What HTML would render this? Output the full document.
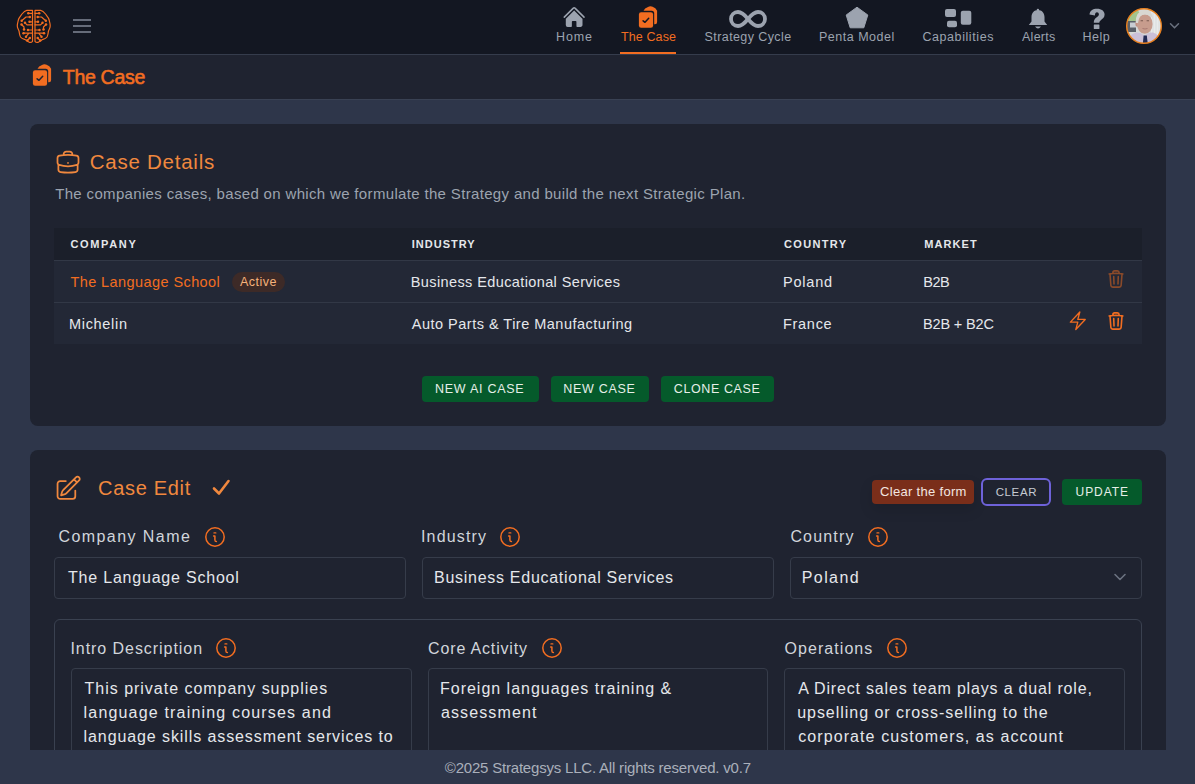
<!DOCTYPE html>
<html><head><meta charset="utf-8">
<style>
*{box-sizing:border-box;margin:0;padding:0}
html,body{width:1195px;height:784px;overflow:hidden;background:#2e364a;font-family:"Liberation Sans",sans-serif;position:relative}
.a{position:absolute}
.t{position:absolute;white-space:nowrap;line-height:1}
#nav{position:absolute;left:0;top:0;width:1195px;height:55px;background:#131722;border-bottom:1px solid #353c4c}
.nl{position:absolute;top:31px;font-size:12px;color:#9ca3af;white-space:nowrap;line-height:1}
#sub{position:absolute;left:0;top:55px;width:1195px;height:45px;background:#1f2330;border-bottom:1px solid #394153}
.card{position:absolute;left:30px;width:1136px;background:#1f2330;border-radius:8px}
.th{position:absolute;top:240px;font-size:11px;font-weight:bold;letter-spacing:1px;color:#e5e7eb;line-height:1;white-space:nowrap}
.td{position:absolute;font-size:14.5px;color:#e5e7eb;white-space:nowrap;line-height:1}
.btn{position:absolute;background:#055a2b;color:#e6efe8;font-size:12.5px;letter-spacing:1.4px;text-align:center;border-radius:4px;line-height:26px;height:26px}
#footer{position:absolute;left:0;top:750px;width:1195px;height:34px;background:#2e364a}
.lab{position:absolute;font-size:16px;color:#d1d5db;white-space:nowrap;line-height:1}
.info{position:absolute;width:20px;height:20px}
.inp{position:absolute;border:1px solid #363c4a;border-radius:4px}
.itx{position:absolute;font-size:16.5px;color:#e5e7eb;white-space:nowrap;line-height:1}
.ta{position:absolute;font-size:16.5px;color:#e5e7eb;line-height:24px;white-space:nowrap}
</style></head>
<body>
<div id="nav"></div>

<!-- brain logo -->
<svg class="a" style="left:14px;top:7px" width="40" height="40" viewBox="0 0 40 40" fill="none" stroke="#f26d21" stroke-width="1.2" stroke-linecap="round" stroke-linejoin="round">
 <g id="bl"><path d="M18.5 3.3 H12.8 C11 3.6 9.5 5 8 7 C6.5 9 5 10.5 4.5 12.5 C4 14.5 3.3 16.5 3.3 19 C3.3 21 4.5 22.5 5 24 C5.5 26 5.3 28 6.5 30 C7.5 31.5 9 32 10.5 32.3 C12 32.8 13 34.3 15.3 35.3 C16.5 35.6 18 35 18.5 34.3 Z"/><path d="M14.3 6.3 H18.5 M15.8 10 H12 L7.7 13.8 M15.5 14.8 H18.5 M11 15.8 L13 17.8 H18.5 M7.5 17.5 L10 20 V22.5 M14 23 H18.5 M9.5 26.2 H18.5 M12 29.7 L14.5 26.6 M15.8 31 L13.3 33.5"/><g fill="#f26d21" stroke="none"><circle cx="14.3" cy="6.3" r="1.25"/><circle cx="15.8" cy="10" r="1.25"/><circle cx="7.7" cy="13.8" r="1.25"/><circle cx="15.5" cy="14.8" r="1.25"/><circle cx="11" cy="15.8" r="1.25"/><circle cx="7.5" cy="17.5" r="1.25"/><circle cx="10" cy="22.5" r="1.25"/><circle cx="14" cy="23" r="1.25"/><circle cx="9.5" cy="26.2" r="1.25"/><circle cx="12" cy="29.7" r="1.25"/><circle cx="15.8" cy="31" r="1.25"/><circle cx="13.3" cy="33.5" r="1.25"/></g></g>
 <use href="#bl" transform="translate(39.5 0) scale(-1 1)"/>
</svg>
<!-- hamburger -->
<div class="a" style="left:73px;top:19px;width:18px;height:2px;background:#666c7a"></div>
<div class="a" style="left:73px;top:25px;width:18px;height:2px;background:#666c7a"></div>
<div class="a" style="left:73px;top:31px;width:18px;height:2px;background:#666c7a"></div>

<!-- nav: home -->
<svg class="a" style="left:562px;top:4.7px" width="24.3" height="24.3" viewBox="0 0 24 24" fill="#9ca3af"><path d="M11.47 3.841a.75.75 0 0 1 1.06 0l8.69 8.69a.75.75 0 1 0 1.06-1.061l-8.689-8.69a2.25 2.25 0 0 0-3.182 0l-8.69 8.69a.75.75 0 1 0 1.061 1.06l8.69-8.689Z"/><path d="m12 5.432 8.159 8.159c.03.03.06.058.091.086v6.198c0 1.035-.84 1.875-1.875 1.875H15a.75.75 0 0 1-.75-.75v-4.5a.75.75 0 0 0-.75-.75h-3a.75.75 0 0 0-.75.75V21a.75.75 0 0 1-.75.75H5.625a1.875 1.875 0 0 1-1.875-1.875v-6.198a2.29 2.29 0 0 0 .091-.086L12 5.432Z"/></svg>

<!-- nav: the case -->
<svg class="a" style="left:638px;top:5px" width="20" height="24" viewBox="0 0 20 24">
  <path d="M5.5 5.8 Q6.8 3.2 9.5 2.3 Q12 0.8 14.6 1.7 Q17.8 2.6 19.1 5.8 V17 Q19.1 19.2 17 19.2 H16.2 V8.3 Q16.2 5.8 13.7 5.8 Z" fill="#f26d21"/>
  <rect x="0.9" y="7.2" width="14.2" height="15.5" rx="2.2" fill="#f26d21"/>
  <path d="M5.1 15.8 L7 17.3 L10.7 13.3" fill="none" stroke="#131722" stroke-width="1.5" stroke-linecap="round" stroke-linejoin="round"/>
</svg>
<div class="a" style="left:620px;top:52px;width:56px;height:2px;background:#f26d21"></div>

<!-- nav: strategy cycle -->
<svg class="a" style="left:728px;top:9px" width="40" height="20" viewBox="0 0 40 20">
  <path d="M20 10 C16 5 13.5 3 10 3 C6 3 3 6 3 10 C3 14 6 17 10 17 C13.5 17 16 15 20 10 C24 5 26.5 3 30 3 C34 3 37 6 37 10 C37 14 34 17 30 17 C26.5 17 24 15 20 10 Z" fill="none" stroke="#9ca3af" stroke-width="3.8"/>
</svg>

<!-- nav: penta -->
<svg class="a" style="left:845px;top:6px" width="24" height="23" viewBox="0 0 24 23">
  <path d="M12 1.2 L22.8 9 L18.8 21.8 H5.2 L1.2 9 Z" fill="#9ca3af" stroke="#9ca3af" stroke-width="1" stroke-linejoin="round"/>
</svg>

<!-- nav: capabilities -->
<svg class="a" style="left:944px;top:8px" width="29" height="21" viewBox="0 0 29 21">
  <rect x="1" y="1" width="11" height="8" rx="2" fill="#9ca3af"/>
  <rect x="3" y="12.8" width="10" height="6.5" rx="2" fill="#9ca3af"/>
  <rect x="16.8" y="2.8" width="10.5" height="14" rx="2" fill="#9ca3af"/>
</svg>

<!-- nav: alerts -->
<svg class="a" style="left:1027px;top:8px" width="22" height="22" viewBox="0 0 22 22">
  <path d="M11 2 C7.2 2 4.5 4.8 4.5 9 V13.5 L1.8 17 H20.2 L17.5 13.5 V9 C17.5 4.8 14.8 2 11 2 Z" fill="#9ca3af"/>
  <circle cx="10.9" cy="1.9" r="1.2" fill="#9ca3af"/>
  <path d="M8 18.6 H14 Q11 22.4 8 18.6 Z" fill="#9ca3af"/>
</svg>

<!-- nav: help -->
<svg class="a" style="left:1080px;top:4px" width="32" height="28" viewBox="0 0 32 28">
  <path d="M9.5 10.6 C9.8 6.8 12.8 4.8 17 4.8 C21.5 4.8 24.6 7.2 24.6 10.5 C24.6 13.4 22.6 14.8 20.8 16.2 C19.7 17.1 19.3 17.8 19.3 18.8 H13.8 C13.8 16.4 14.6 15 16.4 13.6 C17.9 12.4 18.9 11.6 18.9 10.4 C18.9 9.1 18 8.3 17 8.3 C15.8 8.3 15 9.1 14.9 11.6 Z" fill="#9ca3af"/>
  <rect x="13.8" y="20.4" width="5.6" height="4.6" rx="0.5" fill="#9ca3af"/>
</svg>
<!-- avatar -->
<svg class="a" style="left:1122px;top:4px" width="44" height="44" viewBox="0 0 44 44">
  <defs><clipPath id="cc"><circle cx="22" cy="22" r="17.4"/></clipPath><filter id="bl2" x="-10%" y="-10%" width="120%" height="120%"><feGaussianBlur stdDeviation="0.45"/></filter></defs>
  <g clip-path="url(#cc)"><g filter="url(#bl2)">
    <rect width="44" height="44" fill="#d6d9d8"/>
    <ellipse cx="11" cy="12" rx="7.5" ry="7" fill="#a3c48c"/>
    <rect x="3" y="17" width="11" height="11" fill="#5a6068"/>
    <rect x="8" y="18.5" width="6" height="5" fill="#c9cdd2"/>
    <rect x="29" y="4" width="13" height="27" fill="#e8eaea"/>
    <path d="M31 6 V30 M34 6 V30 M37 6 V30" stroke="#cfd3d4" stroke-width="0.6"/>
    <ellipse cx="15.3" cy="19.5" rx="1.9" ry="3.2" fill="#bf8f80"/>
    <ellipse cx="22.8" cy="20" rx="7.8" ry="9.8" fill="#c79c8d"/>
    <path d="M13.8 19 Q13.2 7.5 22 6 Q31 5.5 31 15.5 Q29.5 11 23 10.6 Q17 10.6 16 19 Z" fill="#d9d8d2"/>
    <path d="M18.6 16.8 H21 M24.6 16.8 H27" stroke="#7a5a50" stroke-width="1.1"/>
    <path d="M20.5 24.5 Q23 25.5 25.5 24.5" stroke="#a0706a" stroke-width="0.8" fill="none"/>
    <path d="M4 44 Q5 31 14 28.5 Q18.5 28 22.5 31.5 Q26.5 28 31 28.5 Q39 30.5 40 44 Z" fill="#cbc0d8"/>
    <path d="M21.6 31.5 L24.8 31.5 L25.8 40 L23.3 43 L20.8 40 Z" fill="#202c55"/>
  </g></g>
  <circle cx="22" cy="22" r="17.3" fill="none" stroke="#e8801f" stroke-width="1.5"/>
</svg>
<svg class="a" style="left:1169px;top:22px" width="11" height="8" viewBox="0 0 11 8"><path d="M1.5 1.8 L5.5 5.8 L9.5 1.8" fill="none" stroke="#6b7280" stroke-width="1.5" stroke-linecap="round"/></svg>

<!-- sub header -->
<div id="sub"></div>
<svg class="a" style="left:31.8px;top:63.2px" width="20" height="24" viewBox="0 0 20 24">
  <path d="M5.5 5.8 Q6.8 3.2 9.5 2.3 Q12 0.8 14.6 1.7 Q17.8 2.6 19.1 5.8 V17 Q19.1 19.2 17 19.2 H16.2 V8.3 Q16.2 5.8 13.7 5.8 Z" fill="#f26d21"/>
  <rect x="0.9" y="7.2" width="14.2" height="15.5" rx="2.2" fill="#f26d21"/>
  <path d="M5.1 15.8 L7 17.3 L10.7 13.3" fill="none" stroke="#1f2330" stroke-width="1.5" stroke-linecap="round" stroke-linejoin="round"/>
</svg>

<!-- card 1 -->
<div class="card" style="top:124px;height:302px"></div>
<svg class="a" style="left:53.9px;top:148.1px" width="28" height="28" viewBox="0 0 24 24" fill="none" stroke="#f0883e" stroke-width="1.5" stroke-linecap="round" stroke-linejoin="round"><path d="M20.25 14.15v4.25c0 1.094-.787 2.036-1.872 2.18-2.087.277-4.216.42-6.378.42s-4.291-.143-6.378-.42c-1.085-.144-1.872-1.086-1.872-2.18v-4.25m16.5 0a2.18 2.18 0 0 0 .75-1.661V8.706c0-1.081-.768-2.015-1.837-2.175a48.114 48.114 0 0 0-3.413-.387m4.5 8.006c-.194.165-.42.295-.673.38A23.978 23.978 0 0 1 12 15.75c-2.648 0-5.195-.429-7.577-1.22a2.016 2.016 0 0 1-.673-.38m0 0A2.18 2.18 0 0 1 3 12.489V8.706c0-1.081.768-2.015 1.837-2.175a48.111 48.111 0 0 1 3.413-.387m7.5 0V5.25A2.25 2.25 0 0 0 13.5 3h-3a2.25 2.25 0 0 0-2.25 2.25v.894m7.5 0a48.667 48.667 0 0 0-7.5 0M12 12.75h.008v.008H12v-.008Z"/></svg>

<!-- table -->
<div class="a" style="left:54px;top:228px;width:1088px;height:32px;background:#1b1f2a"></div>
<div class="a" style="left:54px;top:260px;width:1088px;height:1px;background:#323846"></div>
<div class="a" style="left:54px;top:261px;width:1088px;height:41px;background:#232836"></div>
<div class="a" style="left:54px;top:302px;width:1088px;height:1px;background:#323846"></div>
<div class="a" style="left:54px;top:303px;width:1088px;height:41px;background:#232836"></div>

<div class="a" style="left:232px;top:272px;width:53px;height:20px;border-radius:10px;background:#3d2a27"></div>
<svg class="a" style="left:1106px;top:268.9px" width="20" height="20" viewBox="0 0 24 24" fill="none" stroke="#8a4a2a" stroke-width="1.9" stroke-linecap="round" stroke-linejoin="round"><path d="m14.74 9-.346 9m-4.788 0L9.26 9m9.968-3.21c.342.052.682.107 1.022.166m-1.022-.165L18.16 19.673a2.25 2.25 0 0 1-2.244 2.077H8.084a2.25 2.25 0 0 1-2.244-2.077L4.772 5.79m14.456 0a48.108 48.108 0 0 0-3.478-.397m-12 .562c.34-.059.68-.114 1.022-.165m0 0a48.11 48.11 0 0 1 3.478-.397m7.5 0v-.916c0-1.18-.91-2.164-2.09-2.201a51.964 51.964 0 0 0-3.32 0c-1.18.037-2.09 1.022-2.09 2.201v.916m7.5 0a48.667 48.667 0 0 0-7.5 0"/></svg>

<svg class="a" style="left:1067.2px;top:310.2px" width="21.6" height="21.6" viewBox="0 0 24 24" fill="none" stroke="#f26d21" stroke-width="1.5" stroke-linecap="round" stroke-linejoin="round"><path d="m3.75 13.5 10.5-11.25L12 10.5h8.25L9.75 21.75 12 13.5H3.75Z"/></svg>
<svg class="a" style="left:1106px;top:310.6px" width="20" height="20" viewBox="0 0 24 24" fill="none" stroke="#f26d21" stroke-width="1.9" stroke-linecap="round" stroke-linejoin="round"><path d="m14.74 9-.346 9m-4.788 0L9.26 9m9.968-3.21c.342.052.682.107 1.022.166m-1.022-.165L18.16 19.673a2.25 2.25 0 0 1-2.244 2.077H8.084a2.25 2.25 0 0 1-2.244-2.077L4.772 5.79m14.456 0a48.108 48.108 0 0 0-3.478-.397m-12 .562c.34-.059.68-.114 1.022-.165m0 0a48.11 48.11 0 0 1 3.478-.397m7.5 0v-.916c0-1.18-.91-2.164-2.09-2.201a51.964 51.964 0 0 0-3.32 0c-1.18.037-2.09 1.022-2.09 2.201v.916m7.5 0a48.667 48.667 0 0 0-7.5 0"/></svg>

<div class="btn" style="left:422px;top:376px;width:117px"></div>
<div class="btn" style="left:551px;top:376px;width:98px"></div>
<div class="btn" style="left:661px;top:376px;width:113px"></div>

<!-- card 2 -->
<div class="card" style="top:450px;height:320px"></div>
<svg class="a" style="left:53.7px;top:473.7px" width="28.4" height="28.4" viewBox="0 0 24 24" fill="none" stroke="#f0883e" stroke-width="1.5" stroke-linecap="round" stroke-linejoin="round"><path d="m16.862 4.487 1.687-1.688a1.875 1.875 0 1 1 2.652 2.652L10.582 16.07a4.5 4.5 0 0 1-1.897 1.13L6 18l.8-2.685a4.5 4.5 0 0 1 1.13-1.897l8.932-8.931Zm0 0L19.5 7.125M18 14v4.75A2.25 2.25 0 0 1 15.75 21H5.25A2.25 2.25 0 0 1 3 18.75V8.25A2.25 2.25 0 0 1 5.25 6H10"/></svg>
<svg class="a" style="left:211px;top:478px" width="20" height="20" viewBox="0 0 20 20" fill="none" stroke="#f0883e" stroke-width="2.6" stroke-linecap="round" stroke-linejoin="round">
  <path d="M3 10.5 L8 15.5 L17.5 3"/>
</svg>

<div class="a" style="left:872px;top:480px;width:102px;height:24px;border-radius:4px;background:#7a2e1a;box-shadow:0 6px 14px rgba(0,0,0,0.12)"></div>
<div class="a" style="left:981px;top:478px;width:70px;height:28px;border-radius:6px;border:2px solid #6e62d9"></div>
<div class="btn" style="left:1062px;top:479px;width:80px"></div>


<div class="inp" style="left:54px;top:557px;width:352px;height:42px"></div>
<div class="inp" style="left:422px;top:557px;width:352px;height:42px"></div>
<div class="inp" style="left:790px;top:557px;width:352px;height:42px"></div>
<svg class="a" style="left:1113px;top:572px" width="14" height="10" viewBox="0 0 14 10"><path d="M2 2.5 L7 7.5 L12 2.5" fill="none" stroke="#6b7280" stroke-width="1.6" stroke-linecap="round" stroke-linejoin="round"/></svg>

<div class="a" style="left:54px;top:619px;width:1088px;height:200px;border:1px solid #3a4150;border-radius:6px"></div>
<div class="inp" style="left:71px;top:668px;width:341px;height:150px"></div>
<div class="inp" style="left:428px;top:668px;width:340px;height:150px"></div>
<div class="inp" style="left:784px;top:668px;width:341px;height:150px"></div>

<!-- info icons -->
<svg width="0" height="0" style="position:absolute"><defs><g id="ic"><circle cx="10" cy="10" r="9.2" fill="none" stroke="#f26d21" stroke-width="1.5"/><path d="M9 5.9 H10.8" stroke="#f26d21" stroke-width="1.4" stroke-linecap="round"/><path d="M8.6 9 H9.9 V13 Q10 14.6 11.4 14.6" fill="none" stroke="#f26d21" stroke-width="1.5" stroke-linecap="round" stroke-linejoin="round"/></g></defs></svg>
<svg class="info" style="left:205px;top:527px" viewBox="0 0 20 20"><use href="#ic"/></svg>
<svg class="info" style="left:500px;top:527px" viewBox="0 0 20 20"><use href="#ic"/></svg>
<svg class="info" style="left:868px;top:527px" viewBox="0 0 20 20"><use href="#ic"/></svg>
<svg class="info" style="left:216px;top:638px" viewBox="0 0 20 20"><use href="#ic"/></svg>
<svg class="info" style="left:542px;top:638px" viewBox="0 0 20 20"><use href="#ic"/></svg>
<svg class="info" style="left:887px;top:638px" viewBox="0 0 20 20"><use href="#ic"/></svg>

<div id="footer"></div>
<div class="t" style="left:556px;top:30.8px;font-size:12.5px;letter-spacing:0.869px;color:#9ca3af">Home</div>
<div class="t" style="left:621.0px;top:30.8px;font-size:12.5px;letter-spacing:0.108px;color:#f26d21">The Case</div>
<div class="t" style="left:704.6px;top:30.8px;font-size:12.5px;letter-spacing:0.405px;color:#9ca3af">Strategy Cycle</div>
<div class="t" style="left:819px;top:30.8px;font-size:12.5px;letter-spacing:0.509px;color:#9ca3af">Penta Model</div>
<div class="t" style="left:922.4px;top:30.8px;font-size:12.5px;letter-spacing:0.585px;color:#9ca3af">Capabilities</div>
<div class="t" style="left:1022.0px;top:30.8px;font-size:12.5px;letter-spacing:0.26px;color:#9ca3af">Alerts</div>
<div class="t" style="left:1082.5px;top:30.8px;font-size:12.5px;letter-spacing:0.515px;color:#9ca3af">Help</div>
<div class="t" style="left:62.8px;top:67.8px;font-size:19.5px;letter-spacing:-0.299px;color:#f26d21;-webkit-text-stroke:0.55px #f26d21">The Case</div>
<div class="t" style="left:89.7px;top:152px;font-size:20.5px;letter-spacing:0.758px;color:#f0883e">Case Details</div>
<div class="t" style="left:55.2px;top:186px;font-size:15px;letter-spacing:0.338px;color:#9ca3af">The companies cases, based on which we formulate the Strategy and build the next Strategic Plan.</div>
<div class="t" style="left:70.4px;top:239px;font-size:11px;letter-spacing:1.655px;color:#e5e7eb;font-weight:bold">COMPANY</div>
<div class="t" style="left:411.8px;top:239px;font-size:11px;letter-spacing:1.003px;color:#e5e7eb;font-weight:bold">INDUSTRY</div>
<div class="t" style="left:784.0px;top:239px;font-size:11px;letter-spacing:1.343px;color:#e5e7eb;font-weight:bold">COUNTRY</div>
<div class="t" style="left:924.3px;top:239px;font-size:11px;letter-spacing:1.074px;color:#e5e7eb;font-weight:bold">MARKET</div>
<div class="t" style="left:70.4px;top:275px;font-size:14.5px;letter-spacing:0.418px;color:#f26d21">The Language School</div>
<div class="t" style="left:240.0px;top:276.2px;font-size:12.5px;letter-spacing:0.483px;color:#f7b27a">Active</div>
<div class="t" style="left:410.8px;top:275px;font-size:14.5px;letter-spacing:0.389px;color:#e5e7eb">Business Educational Services</div>
<div class="t" style="left:783px;top:275px;font-size:14.5px;letter-spacing:0.783px;color:#e5e7eb">Poland</div>
<div class="t" style="left:923.3px;top:275px;font-size:14.5px;letter-spacing:-0.518px;color:#e5e7eb">B2B</div>
<div class="t" style="left:69px;top:316.8px;font-size:14.5px;letter-spacing:0.683px;color:#e5e7eb">Michelin</div>
<div class="t" style="left:411.8px;top:316.8px;font-size:14.5px;letter-spacing:0.49px;color:#e5e7eb">Auto Parts &amp; Tire Manufacturing</div>
<div class="t" style="left:783px;top:316.8px;font-size:14.5px;letter-spacing:0.707px;color:#e5e7eb">France</div>
<div class="t" style="left:923px;top:316.8px;font-size:14.5px;letter-spacing:-0.146px;color:#e5e7eb">B2B + B2C</div>
<div class="t" style="left:435px;top:383px;font-size:12.5px;letter-spacing:0.738px;color:#e6efe8">NEW AI CASE</div>
<div class="t" style="left:563.3px;top:383px;font-size:12.5px;letter-spacing:0.695px;color:#e6efe8">NEW CASE</div>
<div class="t" style="left:673.8px;top:383px;font-size:12.5px;letter-spacing:0.595px;color:#e6efe8">CLONE CASE</div>
<div class="t" style="left:98px;top:478.2px;font-size:20px;letter-spacing:0.693px;color:#f0883e">Case Edit</div>
<div class="t" style="left:880.0px;top:485px;font-size:13px;letter-spacing:0.313px;color:#f3e6e0">Clear the form</div>
<div class="t" style="left:995.7px;top:487.3px;font-size:11.5px;letter-spacing:0.615px;color:#c5cad3">CLEAR</div>
<div class="t" style="left:1075.6px;top:486.3px;font-size:12px;letter-spacing:0.924px;color:#e6efe8">UPDATE</div>
<div class="t" style="left:58.4px;top:529.3px;font-size:16px;letter-spacing:1.445px;color:#d1d5db">Company Name</div>
<div class="t" style="left:421px;top:529.3px;font-size:16px;letter-spacing:1.155px;color:#d1d5db">Industry</div>
<div class="t" style="left:790.4px;top:529.3px;font-size:16px;letter-spacing:1.163px;color:#d1d5db">Country</div>
<div class="t" style="left:68.0px;top:570.1px;font-size:16px;letter-spacing:0.794px;color:#e5e7eb">The Language School</div>
<div class="t" style="left:434px;top:570.1px;font-size:16px;letter-spacing:0.722px;color:#e5e7eb">Business Educational Services</div>
<div class="t" style="left:801.8px;top:570.1px;font-size:16px;letter-spacing:1.396px;color:#e5e7eb">Poland</div>
<div class="t" style="left:70.4px;top:640.5px;font-size:16px;letter-spacing:0.95px;color:#d1d5db">Intro Description</div>
<div class="t" style="left:428.1px;top:640.5px;font-size:16px;letter-spacing:0.834px;color:#d1d5db">Core Activity</div>
<div class="t" style="left:784.6px;top:640.5px;font-size:16px;letter-spacing:1.048px;color:#d1d5db">Operations</div>
<div class="t" style="left:84.6px;top:681.2px;font-size:16px;letter-spacing:0.978px;color:#e5e7eb">This private company supplies</div>
<div class="t" style="left:83.6px;top:705.2px;font-size:16px;letter-spacing:1.176px;color:#e5e7eb">language training courses and</div>
<div class="t" style="left:83.6px;top:729.2px;font-size:16px;letter-spacing:0.903px;color:#e5e7eb">language skills assessment services to</div>
<div class="t" style="left:440px;top:681.2px;font-size:16px;letter-spacing:0.989px;color:#e5e7eb">Foreign languages training &amp;</div>
<div class="t" style="left:441.0px;top:705.2px;font-size:16px;letter-spacing:1.109px;color:#e5e7eb">assessment</div>
<div class="t" style="left:798.2px;top:681.2px;font-size:16px;letter-spacing:0.822px;color:#e5e7eb">A Direct sales team plays a dual role,</div>
<div class="t" style="left:797.2px;top:705.2px;font-size:16px;letter-spacing:0.96px;color:#e5e7eb">upselling or cross-selling to the</div>
<div class="t" style="left:798.2px;top:729.2px;font-size:16px;letter-spacing:1.091px;color:#e5e7eb">corporate customers, as account</div>
<div class="t" style="left:444.8px;top:760.4px;font-size:15px;letter-spacing:-0.199px;color:#aab0bb">©2025 Strategsys LLC. All rights reserved. v0.7</div>
</body></html>
